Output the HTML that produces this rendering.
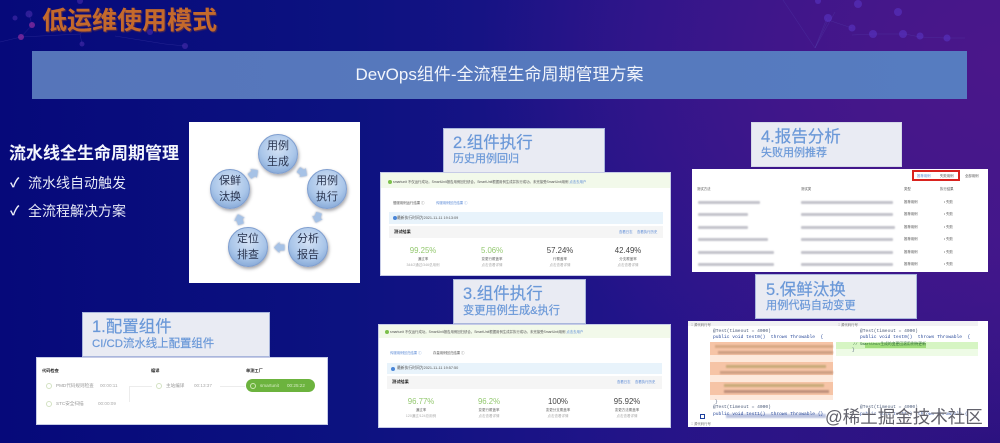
<!DOCTYPE html>
<html lang="zh"><head><meta charset="utf-8">
<style>
*{margin:0;padding:0;box-sizing:border-box}
html,body{width:1000px;height:443px;overflow:hidden;background:#0a1078}
body{position:relative;font-family:"Liberation Sans","Noto Sans CJK SC",sans-serif}
.a{position:absolute;white-space:nowrap}
#bg{position:absolute;inset:0;background:
 radial-gradient(ellipse 520px 380px at 1000px 60px,#4a178a 0%,rgba(74,23,138,.65) 45%,rgba(74,23,138,0) 100%),
 radial-gradient(ellipse 420px 200px at 1000px 443px,#2c1280 0%,rgba(44,18,128,0) 100%),
 linear-gradient(90deg,#06097a 0%,#0c1280 35%,#23148a 65%,#38178c 100%)}
.lab{position:absolute;background:#e9ebf3;border:1px solid #a9b6dc;color:#6a98d8;filter:blur(.25px)}
.lab b{position:absolute;font-weight:400;white-space:nowrap;-webkit-text-stroke:.2px #6a98d8}
.card{position:absolute;background:#fff;overflow:hidden;border:1px solid #c6cbe6;filter:blur(.3px)}
.s{position:absolute;white-space:nowrap;font-size:3.8px;line-height:6px;color:#555}
.h{font-size:4.2px;color:#222;font-weight:700}
.l{color:#5b8ad6;font-size:3.4px}
.num{position:absolute;width:70px;text-align:center;font-size:7.8px;line-height:10px;color:#444}
.sub{position:absolute;width:70px;text-align:center;font-size:3.5px;line-height:5px;color:#666}
.sub2{color:#aaa}
.g{color:#93c86f}
.c{position:absolute;width:40px;height:40px;border-radius:50%;background:radial-gradient(circle at 50% 35%,#d4e2f5 0%,#aac6e9 55%,#6f96cc 100%);box-shadow:1px 2px 3px rgba(60,60,70,.45);border:1px solid #7f9ecf;text-align:center;font-size:11px;line-height:16px;color:#2a3550;padding-top:3px}
.ar{position:absolute;width:11px;height:11px;filter:drop-shadow(0 0 1px rgba(70,90,130,.7))}
.bar{position:absolute;height:2.5px;border-radius:1px;background:#c4c4cc;filter:blur(.7px)}
.code{position:absolute;font-family:"Liberation Mono",monospace;font-size:4.6px;line-height:6px;white-space:nowrap;color:#4a5a78;filter:blur(.3px)}
.hl{position:absolute;height:3px;filter:blur(.8px)}
.i{position:absolute;width:6px;height:6px;border:1px solid #d3e2c2;border-radius:50%}
</style></head><body>
<div id="bg"></div>

<svg class="a" style="left:0;top:0" width="1000" height="110" viewBox="0 0 1000 110">
 <g stroke="#5a50b8" stroke-width=".5" fill="none" opacity=".35">
  <path d="M0 42 L21 37 L32 25 L29 14 M21 37 L80 34 L111 9 M80 34 L82 44 M115 36 L165 44 L185 46"/>
  <path d="M783 0 L815 48 L827 18 M815 48 L828 20 L852 28 M815 48 L835 12 M852 35 L873 34 L905 34 L920 37 L945 38 L965 38"/>
 </g>
 <g fill="#8a2ca0" opacity=".75"><circle cx="21" cy="37" r="3"/><circle cx="32" cy="25" r="3"/></g>
 <g fill="#4e2fb0" opacity=".55"><circle cx="29" cy="14" r="3.5"/><circle cx="15" cy="18" r="2.5"/><circle cx="80" cy="1" r="3"/><circle cx="150" cy="32" r="3"/><circle cx="185" cy="46" r="3"/><circle cx="82" cy="44" r="2.5"/></g>
 <g fill="#5a37c8" opacity=".55"><circle cx="828" cy="18" r="4"/><circle cx="852" cy="28" r="3.5"/><circle cx="873" cy="34" r="4"/><circle cx="903" cy="34" r="4"/><circle cx="920" cy="36" r="3.5"/><circle cx="947" cy="38" r="3.5"/><circle cx="858" cy="4" r="4"/><circle cx="898" cy="12" r="4"/><circle cx="818" cy="1" r="3"/></g>
</svg>

<div class="a" style="left:42px;top:6px;font-size:25px;line-height:30px;font-weight:700;color:#c4692c;text-shadow:1px 1px 1px #5a2f4a;filter:blur(.3px)">低运维使用模式</div>

<div class="a" style="left:32px;top:51px;width:935px;height:48px;background:linear-gradient(90deg,#5675ba,#567cc0);text-align:center;color:#f2f5fb;font-size:17px;line-height:47px">DevOps组件-全流程生命周期管理方案</div>

<div class="a" style="left:9px;top:143px;font-size:17px;line-height:22px;font-weight:700;color:#f4f6fc;filter:blur(.2px)">流水线全生命周期管理</div>
<div class="a" style="left:10px;top:175px;font-size:13px;line-height:16px;font-weight:700;color:#eef0fa">✓</div>
<div class="a" style="left:28px;top:174px;font-size:14px;line-height:18px;color:#e6e9f6;filter:blur(.2px)">流水线自动触发</div>
<div class="a" style="left:10px;top:203px;font-size:13px;line-height:16px;font-weight:700;color:#eef0fa">✓</div>
<div class="a" style="left:28px;top:202px;font-size:14px;line-height:18px;color:#e6e9f6;filter:blur(.2px)">全流程解决方案</div>

<!-- cycle -->
<div class="a" style="left:189px;top:122px;width:171px;height:161px;background:#fff;filter:blur(.25px)">
 <div class="c" style="left:69px;top:12px">用例<br>生成</div>
 <div class="c" style="left:118px;top:47px">用例<br>执行</div>
 <div class="c" style="left:99px;top:105px">分析<br>报告</div>
 <div class="c" style="left:39px;top:105px">定位<br>排查</div>
 <div class="c" style="left:21px;top:47px">保鲜<br>汰换</div>
 <svg class="ar" style="left:107.5px;top:44.5px;transform:rotate(35deg)" viewBox="0 0 11 11"><path fill="#a6c2e6" d="M0.5 2.5H5.5V0L11 5.5 5.5 11V8.5H0.5Z"/></svg>
 <svg class="ar" style="left:122.5px;top:89.5px;transform:rotate(108deg)" viewBox="0 0 11 11"><path fill="#a6c2e6" d="M0.5 2.5H5.5V0L11 5.5 5.5 11V8.5H0.5Z"/></svg>
 <svg class="ar" style="left:84.5px;top:119.5px;transform:rotate(180deg)" viewBox="0 0 11 11"><path fill="#a6c2e6" d="M0.5 2.5H5.5V0L11 5.5 5.5 11V8.5H0.5Z"/></svg>
 <svg class="ar" style="left:44.5px;top:91.5px;transform:rotate(253deg)" viewBox="0 0 11 11"><path fill="#a6c2e6" d="M0.5 2.5H5.5V0L11 5.5 5.5 11V8.5H0.5Z"/></svg>
 <svg class="ar" style="left:58.5px;top:45.5px;transform:rotate(-36deg)" viewBox="0 0 11 11"><path fill="#a6c2e6" d="M0.5 2.5H5.5V0L11 5.5 5.5 11V8.5H0.5Z"/></svg>
</div>

<!-- 1 -->
<div class="lab" style="left:82px;top:312px;width:188px;height:45px">
 <b style="left:9px;top:3px;font-size:16.5px;line-height:22px">1.配置组件</b>
 <b style="left:9px;top:23px;font-size:11.4px;line-height:17px">CI/CD流水线上配置组件</b>
</div>
<div class="card" style="left:36px;top:357px;width:292px;height:68px">
 <div class="s h" style="left:5px;top:10px">代码检查</div>
 <div class="s h" style="left:114px;top:10px">编译</div>
 <div class="s h" style="left:209px;top:10px">单测工厂</div>
 <div class="i" style="left:9px;top:25px"></div>
 <div class="s" style="left:19px;top:25px;font-size:4.6px;color:#999">PMD代码规则检查</div>
 <div class="s" style="left:63px;top:25px;font-size:4.6px;color:#aaa">00:00:11</div>
 <div class="i" style="left:9px;top:43px"></div>
 <div class="s" style="left:19px;top:43px;font-size:4.6px;color:#999">STC安全扫描</div>
 <div class="s" style="left:61px;top:43px;font-size:4.6px;color:#aaa">00:00:09</div>
 <div class="a" style="left:92px;top:28px;width:23px;height:16px;border-top:1px solid #ececec;border-left:1px solid #ececec"></div>
 <div class="i" style="left:119px;top:25px"></div>
 <div class="s" style="left:129px;top:25px;font-size:4.6px;color:#999">主站编译</div>
 <div class="s" style="left:157px;top:25px;font-size:4.6px;color:#aaa">00:13:37</div>
 <div class="a" style="left:183px;top:28px;width:25px;height:1px;background:#ececec"></div>
 <div class="a" style="left:209px;top:21px;width:69px;height:13px;border-radius:7px;background:#6cb33e"></div>
 <div class="i" style="left:213px;top:25px;border-color:#cfe8b4"></div>
 <div class="s" style="left:223px;top:25px;font-size:4.6px;color:#d6ecc4">smartunit</div>
 <div class="s" style="left:250px;top:25px;font-size:4.6px;color:#d6ecc4">00:25:22</div>
</div>

<!-- 2 -->
<div class="lab" style="left:443px;top:128px;width:162px;height:45px;border-bottom:1px dashed #555">
 <b style="left:9px;top:2px;font-size:16.5px;line-height:24px">2.组件执行</b>
 <b style="left:9px;top:22px;font-size:11px;line-height:17px">历史用例回归</b>
</div>
<div class="card" style="left:380px;top:172px;width:291px;height:104px">
 <div class="a" style="left:0;top:0;width:289px;height:15px;background:#f2f9ea"></div>
 <div class="a" style="left:7px;top:7px;width:4px;height:4px;border-radius:50%;background:#7cc04a"></div>
 <div class="s" style="left:12px;top:6px;font-size:3.4px">smartunit 不仅运行成功。SmartUnit报告用例回归绩合。SmartUnit根据用例生成并执行成功。未完接受SmartUnit用例 <span style="color:#5b8ad6">点击去用户</span></div>
 <div class="s" style="left:12px;top:27px;font-size:3.4px">慢服用例运行结果 ⓘ</div>
 <div class="s l" style="left:55px;top:27px">传服用例回归结果 ⓘ</div>
 <div class="a" style="left:8px;top:39px;width:274px;height:12px;background:#e8f3fb"></div>
 <div class="a" style="left:12px;top:43px;width:4px;height:4px;border-radius:50%;background:#4a86d8"></div>
 <div class="s" style="left:16px;top:42px">最新执行时间为2021-11-11 19:13:09</div>
 <div class="a" style="left:8px;top:53px;width:274px;height:12px;background:#f5f5f5"></div>
 <div class="s h" style="left:13px;top:56px">测试结果</div>
 <div class="s l" style="left:238px;top:56px">查看日志</div>
 <div class="s l" style="left:256px;top:56px">查看执行历史</div>
 <div class="num g" style="left:7px;top:73px">99.25%</div>
 <div class="sub" style="left:7px;top:84px">通过率</div><div class="sub sub2" style="left:7px;top:90px">344/2通过/346总用例</div>
 <div class="num g" style="left:76px;top:73px">5.06%</div>
 <div class="sub" style="left:76px;top:84px">变更行覆盖率</div><div class="sub sub2" style="left:76px;top:90px">点击查看详情</div>
 <div class="num" style="left:144px;top:73px">57.24%</div>
 <div class="sub" style="left:144px;top:84px">行覆盖率</div><div class="sub sub2" style="left:144px;top:90px">点击查看详情</div>
 <div class="num" style="left:212px;top:73px">42.49%</div>
 <div class="sub" style="left:212px;top:84px">分支覆盖率</div><div class="sub sub2" style="left:212px;top:90px">点击查看详情</div>
</div>

<!-- 3 -->
<div class="lab" style="left:453px;top:279px;width:133px;height:45px">
 <b style="left:9px;top:2px;font-size:16.5px;line-height:24px">3.组件执行</b>
 <b style="left:9px;top:23px;font-size:11.2px;line-height:17px">变更用例生成&amp;执行</b>
</div>
<div class="card" style="left:378px;top:324px;width:293px;height:104px">
 <div class="a" style="left:0;top:0;width:291px;height:13px;background:#f2f9ea"></div>
 <div class="a" style="left:6px;top:5px;width:4px;height:4px;border-radius:50%;background:#7cc04a"></div>
 <div class="s" style="left:11px;top:4px;font-size:3.4px">smartunit 不仅运行成功。SmartUnit报告用例回归绩合。SmartUnit根据用例生成并执行成功。未完接受SmartUnit用例 <span style="color:#5b8ad6">点击去用户</span></div>
 <div class="s l" style="left:11px;top:25px">传服用例回归结果 ⓘ</div>
 <div class="s" style="left:54px;top:25px;font-size:3.4px">存量用例回归结果 ⓘ</div>
 <div class="a" style="left:8px;top:38px;width:275px;height:11px;background:#e8f3fb"></div>
 <div class="a" style="left:12px;top:42px;width:4px;height:4px;border-radius:50%;background:#4a86d8"></div>
 <div class="s" style="left:18px;top:40px">最新执行时间为2021-11-11 19:57:50</div>
 <div class="a" style="left:8px;top:51px;width:275px;height:13px;background:#f5f5f5"></div>
 <div class="s h" style="left:13px;top:54px">测试结果</div>
 <div class="s l" style="left:238px;top:54px">查看日志</div>
 <div class="s l" style="left:256px;top:54px">查看执行历史</div>
 <div class="num g" style="left:7px;top:72px">96.77%</div>
 <div class="sub" style="left:7px;top:83px">通过率</div><div class="sub sub2" style="left:7px;top:89px">120通过/124总用例</div>
 <div class="num g" style="left:75px;top:72px">96.2%</div>
 <div class="sub" style="left:75px;top:83px">变更行覆盖率</div><div class="sub sub2" style="left:75px;top:89px">点击查看详情</div>
 <div class="num" style="left:144px;top:72px">100%</div>
 <div class="sub" style="left:144px;top:83px">变更分支覆盖率</div><div class="sub sub2" style="left:144px;top:89px">点击查看详情</div>
 <div class="num" style="left:213px;top:72px">95.92%</div>
 <div class="sub" style="left:213px;top:83px">变更方法覆盖率</div><div class="sub sub2" style="left:213px;top:89px">点击查看详情</div>
</div>

<!-- 4 -->
<div class="lab" style="left:751px;top:122px;width:151px;height:45px;border-color:#d5d8e8">
 <b style="left:9px;top:2px;font-size:16.5px;line-height:24px">4.报告分析</b>
 <b style="left:9px;top:22px;font-size:11px;line-height:17px">失败用例推荐</b>
</div>
<div class="a" style="left:692px;top:169px;width:296px;height:103px;background:#fff;overflow:hidden;filter:blur(.3px)">
 <div class="a" style="left:220px;top:1px;width:48px;height:11px;border:2px solid #d9231f"></div>
 <div class="s l" style="left:225px;top:3.5px">推荐用例</div>
 <div class="s" style="left:248px;top:3.5px;font-size:3.4px">失败用例</div>
 <div class="s" style="left:273px;top:3.5px;font-size:3.4px">全部用例</div>
 <div class="s" style="left:5px;top:17px;font-size:3.4px">测试方法</div>
 <div class="s" style="left:109px;top:17px;font-size:3.4px">测试类</div>
 <div class="s" style="left:212px;top:17px;font-size:3.4px">类型</div>
 <div class="s" style="left:248px;top:17px;font-size:3.4px">执行结果</div>
 <div class="bar" style="left:6px;top:32px;width:62px"></div><div class="bar" style="left:109px;top:32px;width:92px"></div>
 <div class="s" style="left:212px;top:30px;font-size:3.4px">推荐用例</div><div class="s" style="left:252px;top:30px;font-size:3.4px">• 失败</div>
 <div class="bar" style="left:6px;top:44px;width:50px"></div><div class="bar" style="left:109px;top:44px;width:92px"></div>
 <div class="s" style="left:212px;top:42px;font-size:3.4px">推荐用例</div><div class="s" style="left:252px;top:42px;font-size:3.4px">• 失败</div>
 <div class="bar" style="left:6px;top:57px;width:50px"></div><div class="bar" style="left:109px;top:57px;width:94px"></div>
 <div class="s" style="left:212px;top:55px;font-size:3.4px">推荐用例</div><div class="s" style="left:252px;top:55px;font-size:3.4px">• 失败</div>
 <div class="bar" style="left:6px;top:69px;width:70px"></div><div class="bar" style="left:109px;top:69px;width:92px"></div>
 <div class="s" style="left:212px;top:67px;font-size:3.4px">推荐用例</div><div class="s" style="left:252px;top:67px;font-size:3.4px">• 失败</div>
 <div class="bar" style="left:6px;top:82px;width:76px"></div><div class="bar" style="left:109px;top:82px;width:92px"></div>
 <div class="s" style="left:212px;top:80px;font-size:3.4px">推荐用例</div><div class="s" style="left:252px;top:80px;font-size:3.4px">• 失败</div>
 <div class="bar" style="left:6px;top:94px;width:76px"></div><div class="bar" style="left:109px;top:94px;width:92px"></div>
 <div class="s" style="left:212px;top:92px;font-size:3.4px">推荐用例</div><div class="s" style="left:252px;top:92px;font-size:3.4px">• 失败</div>
</div>

<!-- 5 -->
<div class="lab" style="left:755px;top:274px;width:162px;height:45px">
 <b style="left:10px;top:3px;font-size:16.5px;line-height:24px">5.保鲜汰换</b>
 <b style="left:10px;top:23px;font-size:11.2px;line-height:17px">用例代码自动变更</b>
</div>
<div class="a" style="left:688px;top:321px;width:300px;height:106px;background:#fff;overflow:hidden;filter:blur(.3px)">
 <div class="a" style="left:0;top:0;width:290px;height:5px;background:#f1f1f3"></div>
 <div class="a" style="left:22px;top:21px;width:123px;height:58px;background:#fde9dc"></div>
 <div class="a" style="left:22px;top:21px;width:123px;height:13px;background:#f6c4a6"></div>
 <div class="a" style="left:22px;top:41px;width:123px;height:13px;background:#f6c4a6"></div>
 <div class="a" style="left:22px;top:61px;width:123px;height:13px;background:#f6c4a6"></div>
 <div class="hl" style="left:27px;top:24px;width:118px;background:#d8a985"></div>
 <div class="hl" style="left:30px;top:30px;width:115px;background:#cfa084"></div>
 <div class="hl" style="left:38px;top:44px;width:100px;background:#c9ab7a"></div>
 <div class="hl" style="left:32px;top:50px;width:113px;background:#cfa084"></div>
 <div class="hl" style="left:36px;top:63px;width:100px;background:#c9ab7a"></div>
 <div class="hl" style="left:36px;top:69px;width:105px;background:#c0917c"></div>
 <div class="a" style="left:148px;top:21px;width:142px;height:7px;background:#d6f5c3"></div>
 <div class="a" style="left:148px;top:28px;width:142px;height:7px;background:#eefbe6"></div>
 <div class="hl" style="left:38px;top:93px;width:100px;height:4px;background:#bcc4e0"></div>
 <div class="s" style="left:3px;top:1px;font-size:3.4px;color:#777">⌶ 源代码行号</div>
 <div class="s" style="left:150px;top:1px;font-size:3.4px;color:#777">⌶ 源代码行号</div>
 <div class="s" style="left:3px;top:100px;font-size:3.4px;color:#777">⌶ 源代码行号</div>
 <div class="code" style="left:25px;top:8px">@Test(timeout = 4000)</div>
 <div class="code" style="left:25px;top:14px;color:#2a4a9a">public void test0() &nbsp;throws Throwable &nbsp;{</div>
 <div class="code" style="left:27px;top:79px">}</div>
 <div class="code" style="left:25px;top:84px">@Test(timeout = 4000)</div>
 <div class="code" style="left:25px;top:91px;color:#2a4a9a">public void test1() &nbsp;throws Throwable {}</div>
 <div class="code" style="left:172px;top:8px">@Test(timeout = 4000)</div>
 <div class="code" style="left:172px;top:14px;color:#2a4a9a">public void test0() &nbsp;throws Throwable &nbsp;{</div>
 <div class="a" style="left:177px;top:22px;width:61px;height:5px;background:#9fdc7a"></div>
 <div class="code" style="left:165px;top:21px;font-size:3.8px;color:#2f6a3a">// SmartUnit生成的变更回滚用例待更新</div>
 <div class="code" style="left:164px;top:27px">}</div>
 <div class="code" style="left:172px;top:84px">@Test(timeout = 4000)</div>
 <div class="code" style="left:172px;top:91px;color:#2a4a9a">public void test1() &nbsp;throws Throwable {</div>
 <div class="a" style="left:12px;top:93px;width:5px;height:5px;border:1.5px solid #1c3f9c"></div>
</div>

<div class="a" style="left:825px;top:406px;font-size:17.5px;line-height:22px;color:#62626c;text-shadow:0 0 1px #fff,0 0 1px rgba(255,255,255,.7);filter:blur(.25px)">@稀土掘金技术社区</div>
</body></html>
